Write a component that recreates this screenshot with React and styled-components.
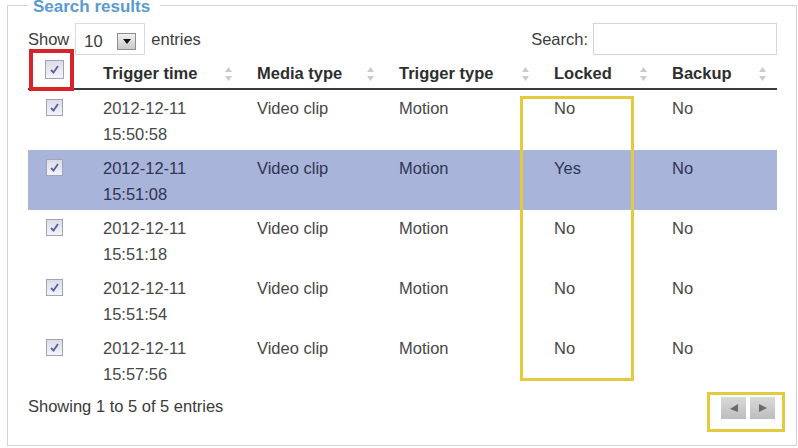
import styled, { createGlobalStyle } from "styled-components";

const GlobalStyle = createGlobalStyle`
  html, body {
    margin: 0;
    padding: 0;
    background: #fff;
  }
  body {
    font-family: "Liberation Sans", Arial, sans-serif;
    font-size: 16.5px;
    color: #3c3c3c;
  }
`;

const columns = [
  { key: "time", label: "Trigger time", width: 154 },
  { key: "media", label: "Media type", width: 142 },
  { key: "trigger", label: "Trigger type", width: 155 },
  { key: "locked", label: "Locked", width: 118 },
  { key: "backup", label: "Backup", width: 119 },
];

const events = [
  { date: "2012-12-11", time: "15:50:58", media: "Video clip", trigger: "Motion", locked: "No", backup: "No" },
  { date: "2012-12-11", time: "15:51:08", media: "Video clip", trigger: "Motion", locked: "Yes", backup: "No", selected: true },
  { date: "2012-12-11", time: "15:51:18", media: "Video clip", trigger: "Motion", locked: "No", backup: "No" },
  { date: "2012-12-11", time: "15:51:54", media: "Video clip", trigger: "Motion", locked: "No", backup: "No" },
  { date: "2012-12-11", time: "15:57:56", media: "Video clip", trigger: "Motion", locked: "No", backup: "No" },
];

const Page = styled.div`
  position: relative;
  display: flow-root;
  width: 798px;
  height: 448px;
  overflow: hidden;
`;

const ResultsBox = styled.fieldset`
  box-sizing: border-box;
  width: 790px;
  height: 453px;
  margin: -7px 0 0 7px;
  padding: 5px 19px 0 20px;
  border: 1px solid #d2d2d2;
  min-width: 0;
`;

const Legend = styled.legend`
  padding: 4px 10px 0 5px;
  font-size: 17px;
  line-height: 20px;
  font-weight: bold;
  color: #5a9ad2;
`;

const Toolbar = styled.div`
  display: flex;
  justify-content: space-between;
  align-items: center;
  height: 34px;
`;

const Group = styled.div`
  display: flex;
  align-items: center;
  gap: ${(p) => p.$gap || 6}px;
`;

const SelectBox = styled.div`
  box-sizing: border-box;
  display: flex;
  align-items: center;
  justify-content: space-between;
  width: 70px;
  height: 32px;
  padding: 5px 8px 0 8px;
  border: 1px solid #dadada;
  background: #fff;
`;

const DropButton = styled.span`
  box-sizing: border-box;
  display: flex;
  align-items: center;
  justify-content: center;
  width: 19px;
  height: 17px;
  border: 1px solid #8e8e8e;
  background: linear-gradient(#f0f0f0, #c9c9c9);
`;

const SearchInput = styled.div`
  box-sizing: border-box;
  width: 184px;
  height: 32px;
  border: 1px solid #d4d4d4;
  background: #fff;
`;

const Table = styled.table`
  width: 749px;
  table-layout: fixed;
  border-collapse: separate;
  border-spacing: 0;
`;

const HeadCell = styled.th`
  padding: 0;
  border-bottom: 2px solid #3a3a3a;
  text-align: left;
  font-weight: bold;
  color: #2e2e2e;
`;

const HeadInner = styled.div`
  box-sizing: border-box;
  display: flex;
  align-items: center;
  justify-content: space-between;
  height: 32px;
  padding: 3px 10px 0 ${(p) => (p.$check ? 17 : 14)}px;
`;

const Row = styled.tr`
  background: ${(p) => (p.$selected ? "#a8b4da" : "transparent")};
  color: ${(p) => (p.$selected ? "#2f3552" : "#474747")};
`;

const Cell = styled.td`
  padding: ${(p) => (p.$check ? "9px 0 3px 18px" : "5px 0 3px 14px")};
  line-height: 26px;
  vertical-align: top;
  white-space: nowrap;
`;

const Check = styled.span`
  box-sizing: border-box;
  display: flex;
  align-items: center;
  justify-content: center;
  width: ${(p) => (p.$head ? 19 : 17)}px;
  height: ${(p) => (p.$head ? 19 : 17)}px;
  margin-bottom: ${(p) => (p.$head ? 8 : 0)}px;
  border: 1px solid #a3a3b8;
  background: linear-gradient(#dcdce8, #f3f3f8);
`;

const Footer = styled.div`
  display: flex;
  justify-content: space-between;
  align-items: flex-start;
`;

const Info = styled.div`
  padding-top: 3px;
  line-height: 26px;
  color: #3a3a3a;
`;

const Pager = styled.div`
  display: flex;
  gap: 4px;
  margin: 7px 2px 0 0;
`;

const PageButton = styled.span`
  display: flex;
  align-items: center;
  justify-content: center;
  width: 25px;
  height: 22px;
  background: linear-gradient(#d9d9d9, #bdbdbd);
`;

// callout frames drawn over the table
const Marker = styled.div`
  position: absolute;
  box-sizing: border-box;
  left: ${(p) => p.$x}px;
  top: ${(p) => p.$y}px;
  width: ${(p) => p.$w}px;
  height: ${(p) => p.$h}px;
  border: ${(p) => p.$line}px solid ${(p) => p.$color};
  pointer-events: none;
`;

const CheckMark = () => (
  <svg width="11" height="11" viewBox="0 0 11 11">
    <path d="M2 6 L4.5 8.5 L9 2" fill="none" stroke="#5661a6" strokeWidth="1.8" />
  </svg>
);

const SortIcon = () => (
  <svg width="9" height="16" viewBox="0 0 9 16">
    <polygon points="4.5,1 8,6 1,6" fill="#cacaca" />
    <polygon points="1,10 8,10 4.5,15" fill="#cacaca" />
  </svg>
);

export default function App() {
  return (
    <Page>
      <GlobalStyle />
      <ResultsBox>
        <Legend>Search results</Legend>
        <Toolbar>
          <Group $gap={6}>
            <span>Show</span>
            <SelectBox>
              <span>10</span>
              <DropButton>
                <svg width="8" height="5" viewBox="0 0 8 5">
                  <polygon points="0,0 8,0 4,5" fill="#111" />
                </svg>
              </DropButton>
            </SelectBox>
            <span>entries</span>
          </Group>
          <Group $gap={5}>
            <span>Search:</span>
            <SearchInput />
          </Group>
        </Toolbar>

        <Table>
          <colgroup>
            <col style={{ width: 61 }} />
            {columns.map((c) => (
              <col key={c.key} style={{ width: c.width }} />
            ))}
          </colgroup>
          <thead>
            <tr>
              <HeadCell>
                <HeadInner $check>
                  <Check $head>
                    <CheckMark />
                  </Check>
                </HeadInner>
              </HeadCell>
              {columns.map((c) => (
                <HeadCell key={c.key}>
                  <HeadInner>
                    <span>{c.label}</span>
                    <SortIcon />
                  </HeadInner>
                </HeadCell>
              ))}
            </tr>
          </thead>
          <tbody>
            {events.map((e) => (
              <Row key={e.time} $selected={e.selected}>
                <Cell $check>
                  <Check>
                    <CheckMark />
                  </Check>
                </Cell>
                <Cell>
                  {e.date}
                  <br />
                  {e.time}
                </Cell>
                <Cell>{e.media}</Cell>
                <Cell>{e.trigger}</Cell>
                <Cell>{e.locked}</Cell>
                <Cell>{e.backup}</Cell>
              </Row>
            ))}
          </tbody>
        </Table>

        <Footer>
          <Info>Showing 1 to 5 of 5 entries</Info>
          <Pager>
            <PageButton>
              <svg width="10" height="9" viewBox="0 0 10 9">
                <polygon points="9,0 1,5 9,8" fill="#6a6a6a" />
              </svg>
            </PageButton>
            <PageButton>
              <svg width="10" height="9" viewBox="0 0 10 9">
                <polygon points="1,0 9,4 1,8" fill="#6a6a6a" />
              </svg>
            </PageButton>
          </Pager>
        </Footer>
      </ResultsBox>

      <Marker $x={29} $y={49} $w={45} $h={42} $line={4} $color="#d8232b" />
      <Marker $x={520} $y={96} $w={114} $h={285} $line={3} $color="#e4ca3f" />
      <Marker $x={707} $y={392} $w={78} $h={40} $line={3} $color="#e4ca3f" />
    </Page>
  );
}
